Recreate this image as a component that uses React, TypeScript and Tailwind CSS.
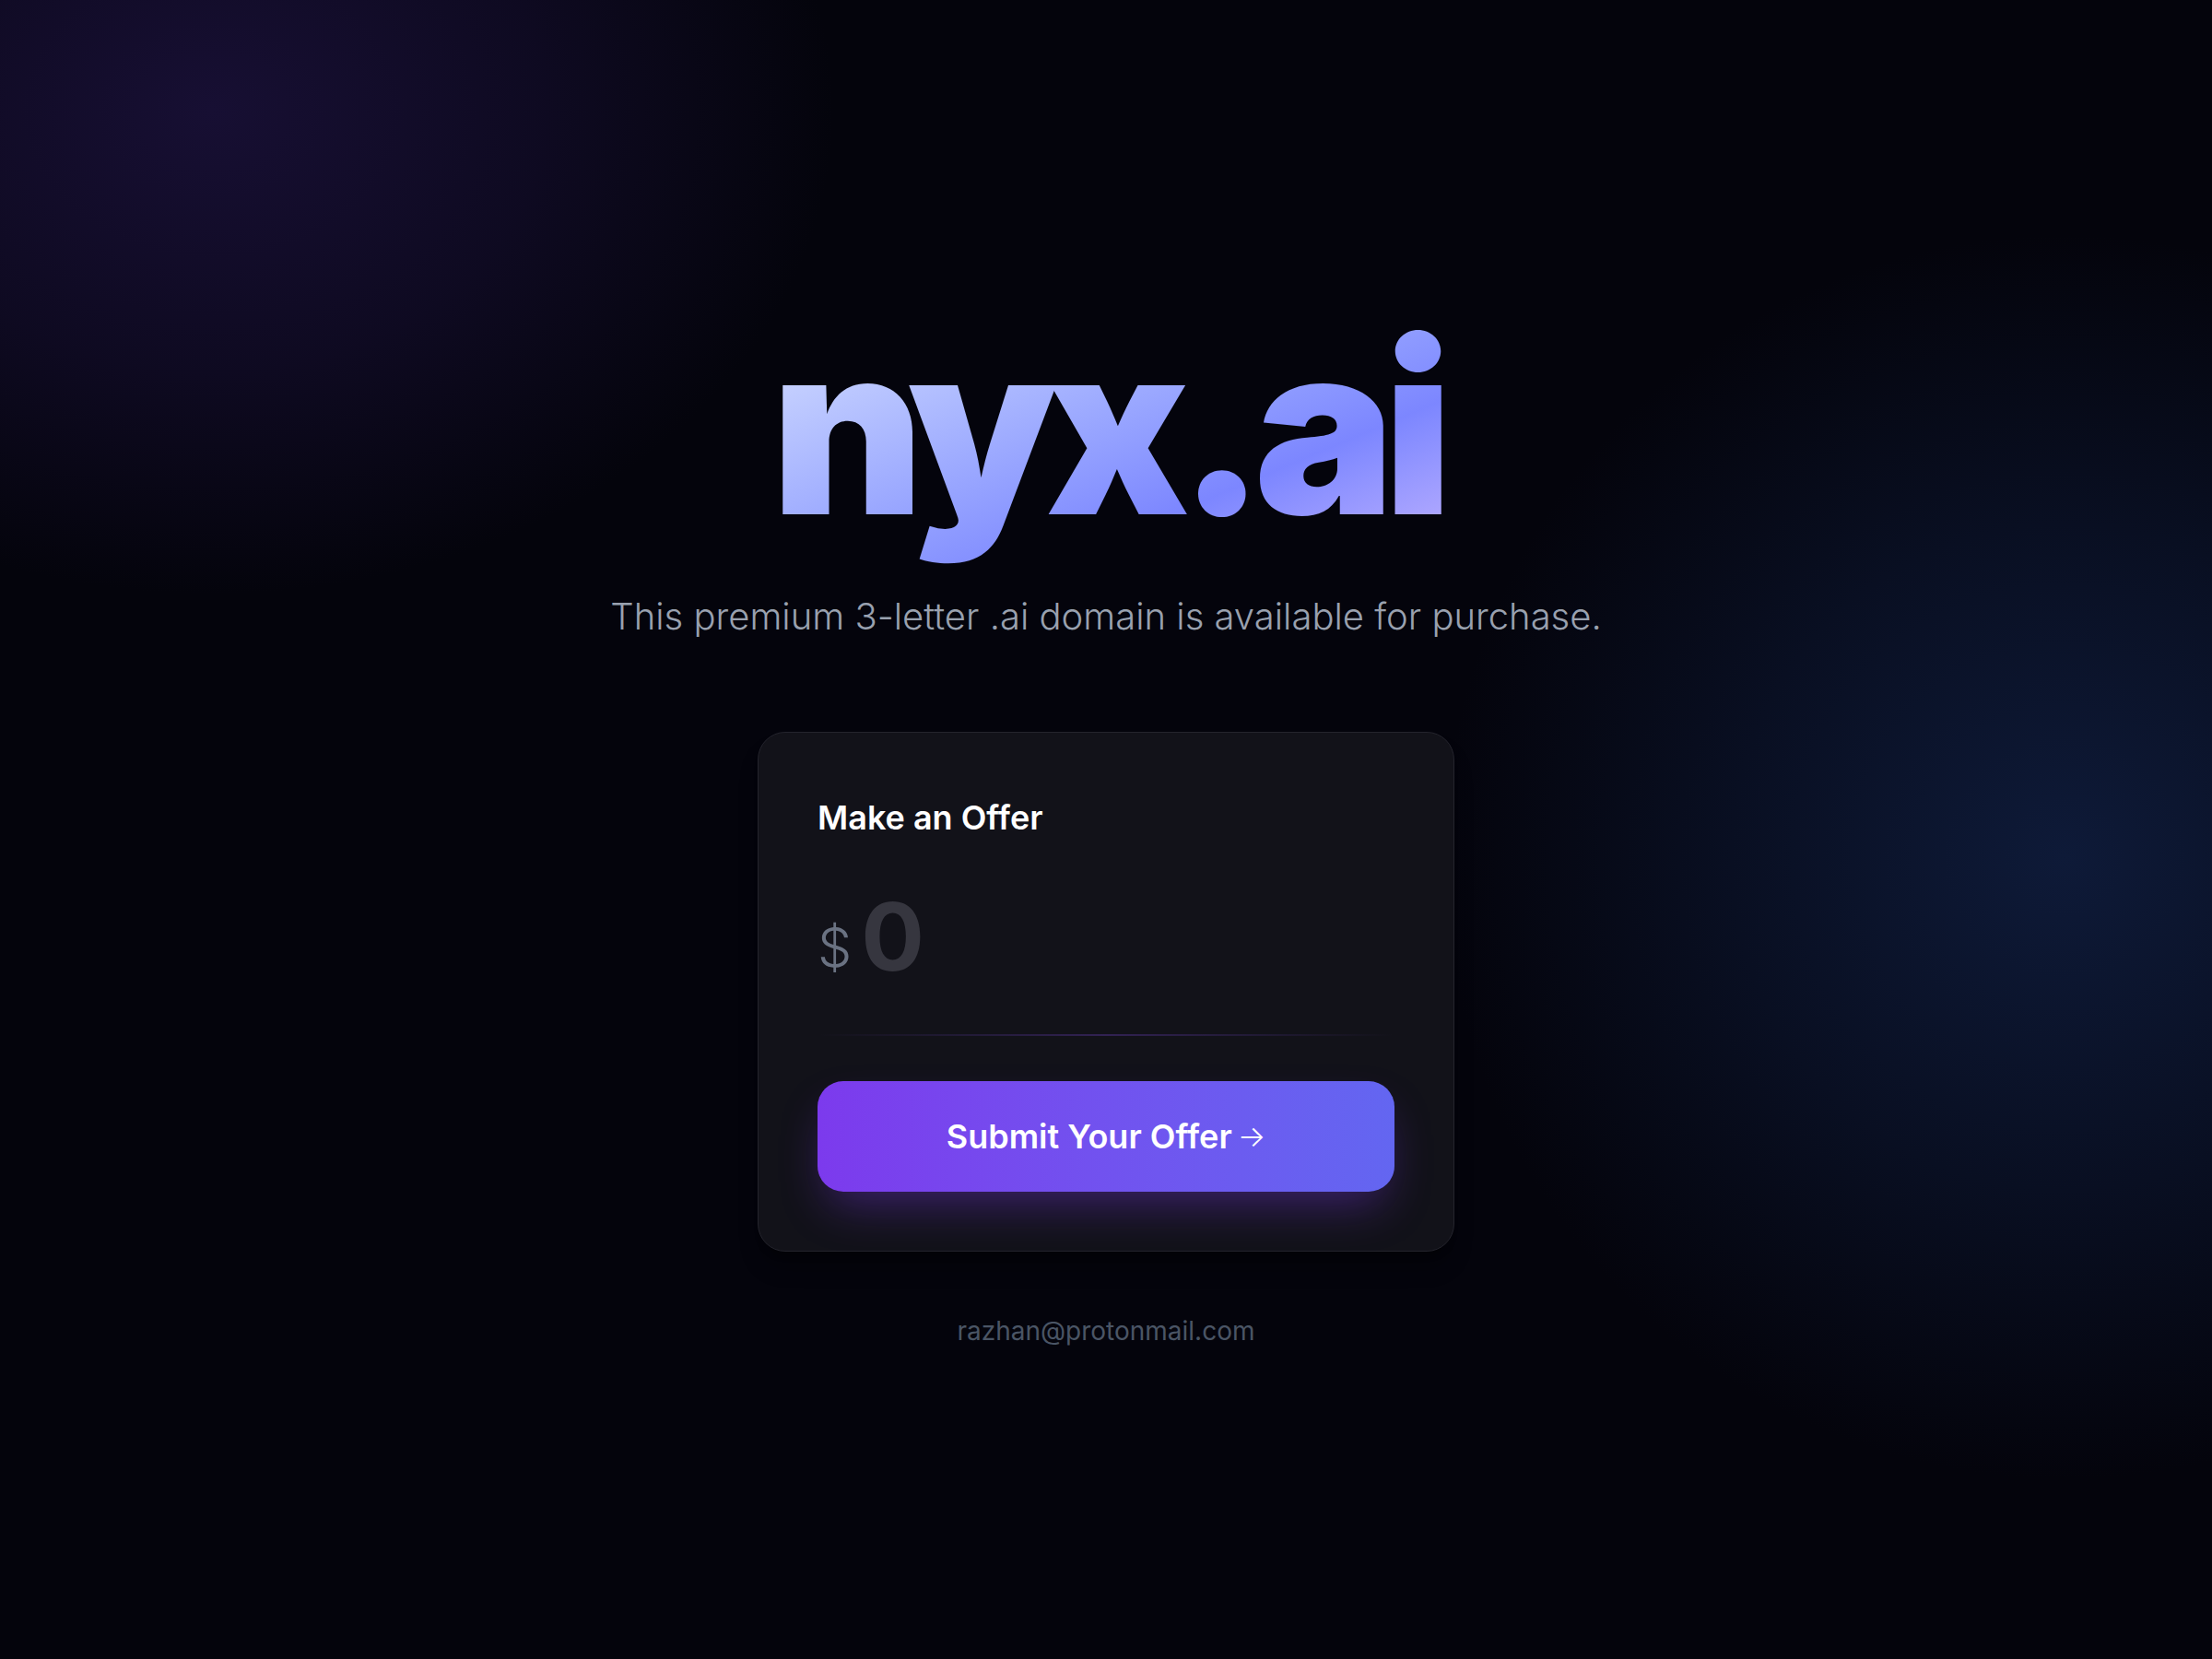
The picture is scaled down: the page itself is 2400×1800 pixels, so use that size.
import React, { useState } from "react";

export default function App() {
    const [offer, setOffer] = useState("");

    return (
        <div className="min-h-screen w-full bg-[#04040c] bg-[radial-gradient(ellipse_900px_700px_at_230px_120px,#170f33_0%,rgba(23,15,51,0.55)_40%,transparent_75%),radial-gradient(ellipse_900px_900px_at_2240px_930px,#0e1a38_0%,rgba(14,26,56,0.5)_40%,transparent_75%)] font-[Inter,'Noto_Sans',sans-serif] antialiased">
            <main className="flex flex-col items-center pt-[312px] pb-[200px]">
                {/* Domain name */}
                <h1 className="text-[256px] leading-[1.2] font-black tracking-[-0.05em] bg-linear-to-br from-indigo-100 via-indigo-400 via-70% to-violet-300 bg-clip-text text-transparent">
                    nyx.ai
                </h1>
                <p className="mt-[30px] text-[40px] leading-none font-light text-gray-400">
                    This premium 3-letter .ai domain is available for purchase.
                </p>

                {/* Offer card */}
                <div className="mt-[105px] w-[756px] rounded-[30px] border border-[#24242d] bg-[#121219] px-[64px] pt-[74px] pb-[64px] shadow-xl shadow-black/30">
                    <h2 className="text-[36px] leading-none font-semibold text-white">Make an Offer</h2>

                    <div className="mt-[60px] flex items-end gap-[10px]">
                        <span className="mb-[10px] text-[59px] leading-none font-light text-gray-500">$</span>
                        <input
                            value={offer}
                            onChange={(e) => setOffer(e.target.value.replace(/[^0-9]/g, ""))}
                            placeholder="0"
                            className="h-[102px] w-full bg-transparent text-[102px] leading-none font-bold text-white placeholder:text-[#36363f] outline-none"
                        />
                    </div>
                    <div className="mt-[55px] h-[2px] bg-linear-to-r from-transparent via-violet-500/25 to-transparent" />

                    <button className="mt-[49px] flex h-[120px] w-full items-center justify-center rounded-[28px] bg-linear-to-r from-[#7c3aed] to-[#6366f1] text-[36px] font-semibold text-white shadow-[0_24px_50px_-12px_rgba(124,58,237,0.4)]">
                        Submit Your Offer <span className="ml-[6px] text-[32px] font-light">→</span>
                    </button>
                </div>

                <p className="mt-[72px] text-[28px] leading-none text-gray-600">razhan@protonmail.com</p>
            </main>
        </div>
    );
}
